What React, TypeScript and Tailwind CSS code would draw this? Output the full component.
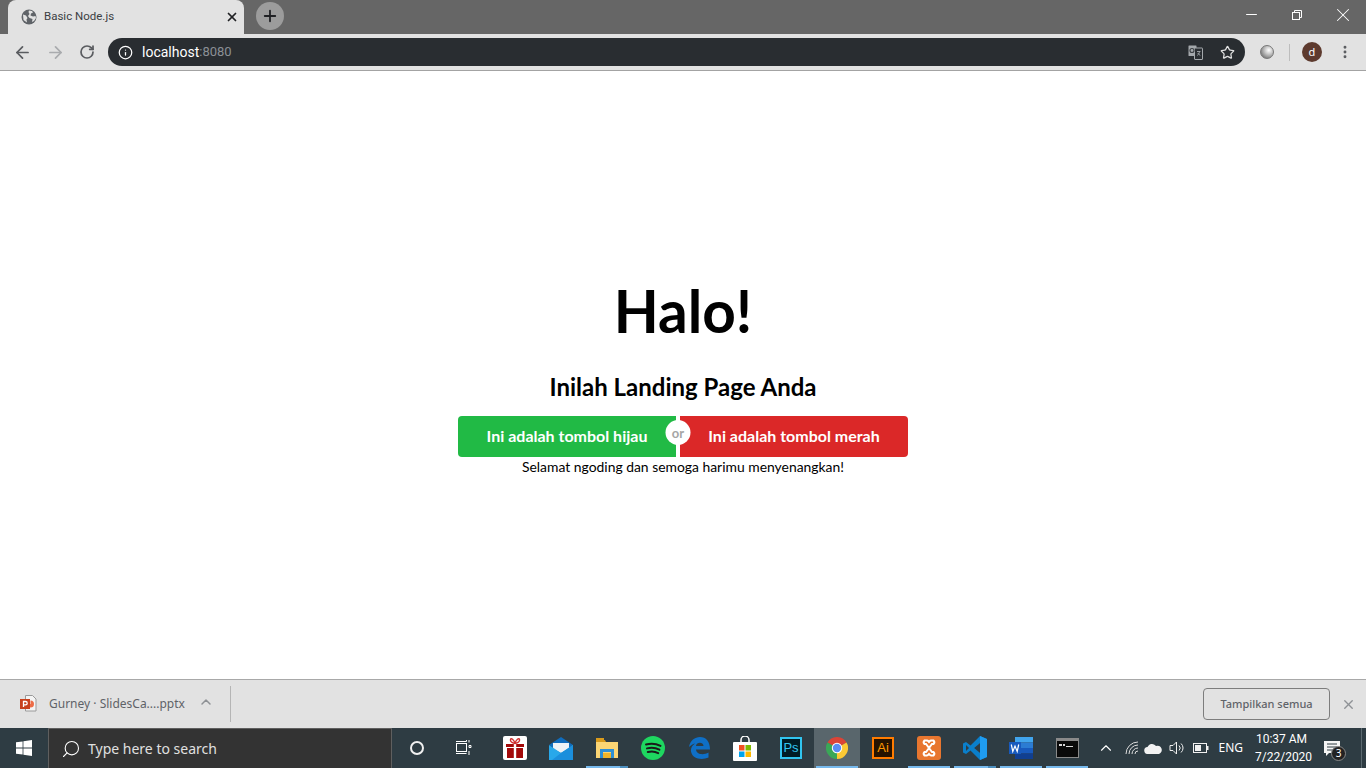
import React from 'react';
import { ArrowLeft, ArrowRight, RotateCw, X, Plus, Info, Star, Search, ChevronUp, Minus, MoreVertical } from 'lucide-react';

const UI_FONT = "font-['Noto_Sans','Open_Sans',sans-serif]";

function Globe() {
  return (
    <svg width="16" height="16" viewBox="0 0 16 16">
      <circle cx="8" cy="8" r="7.5" fill="#5f6368" />
      <path d="M2 5.5l3 1 1.5 2.5-1 1.5.5 3L2.5 11zM8 1.5l3 .5 1 1.5-2 1-.5 2 2.5 1 2.5-.5.5 2-2 3-2 1 .5-3-3-1-1.5-2 1.5-2-1-2z" fill="#e2e2e2" />
    </svg>
  );
}

function RestoreIcon() {
  return (
    <svg width="10" height="10" viewBox="0 0 10 10" fill="none" stroke="#fff" strokeWidth="1">
      <rect x="0.5" y="2.5" width="7" height="7" />
      <path d="M2.5 2.5v-2h7v7h-2" />
    </svg>
  );
}

function TranslateIcon() {
  return (
    <svg width="15" height="15" viewBox="0 0 15 15">
      <rect x="0.5" y="0.5" width="8" height="10.5" rx="0.5" fill="#a4a8ac" />
      <rect x="6.5" y="3" width="8" height="11.5" rx="0.5" fill="#2a2e32" stroke="#a4a8ac" />
      <circle cx="4" cy="5.5" r="2" fill="none" stroke="#3a3e42" strokeWidth="1.1" />
      <path d="M9 6.5h3.5M11.5 6.5c-.3 2-1 3-2.2 4M9.8 8c.5 1 1.3 1.8 2.5 2.4" fill="none" stroke="#a4a8ac" strokeWidth="0.9" />
    </svg>
  );
}

function PptIcon() {
  return (
    <svg width="17" height="18" viewBox="0 0 17 18">
      <path d="M5.5 .5h7l3.5 3.5v12H5.5z" fill="#f4f4f4" stroke="#9a9a9a" />
      <path d="M10.5 5.5a3.5 3.5 0 1 1-3.500 3.500h3.500z" fill="#ed6c47" />
      <rect x="0" y="4" width="10" height="10" fill="#c8401c" />
      <path d="M3.5 12V6.500h2a1.700 1.700 0 0 1 0 3.400h-2" fill="none" stroke="#fff" strokeWidth="1.3" />
    </svg>
  );
}

function WindowsLogo() {
  return (
    <svg width="16" height="16" viewBox="0 0 16 16" fill="#fff">
      <path d="M0 2.3L6.6 1.4V7.6H0zM7.4 1.3L16 0V7.6H7.4zM0 8.4H6.6V14.6L0 13.7zM7.4 8.4H16V16L7.4 14.7z" />
    </svg>
  );
}

function TaskViewIcon() {
  return (
    <svg width="17" height="16" viewBox="0 0 17 16" fill="none" stroke="#fff" strokeWidth="1">
      <rect x="1.5" y="3.5" width="10" height="8" />
      <path d="M1 1.500h10.500M1 13.500h10.500M11.500 1.500v-1.500M14 0v2.500M14 5.500h2v2h-2zM14 11v4" />
    </svg>
  );
}

function GiftIcon() {
  return (
    <svg width="24" height="24" viewBox="0 0 24 24">
      <rect width="24" height="24" rx="2" fill="#fff" />
      <path d="M3 8h18v3H3zM4 12h16v10H4z" fill="#a30a0a" />
      <rect x="10.8" y="8" width="2.4" height="14" fill="#fff" />
      <path d="M12 7.500C9 7 7 5.500 7.500 3.500S11 3.500 12 7.500C13 3.500 16 1.500 16.500 3.500S15 7 12 7.500z" fill="none" stroke="#d03030" strokeWidth="1.4" />
    </svg>
  );
}

function MailIcon() {
  return (
    <svg width="24" height="23" viewBox="0 0 24 23">
      <path d="M12 0L0 8l12 8 12-8z" fill="#0f6cbd" />
      <path d="M4 6h16v6l-8 4-8-4z" fill="#eef2f6" />
      <path d="M0 8l12 8 12-8v15H0z" fill="#28a8ea" />
      <path d="M24 23H3l9-7 12-8z" fill="#1b8fdc" />
    </svg>
  );
}

function FolderIcon() {
  return (
    <svg width="22" height="20" viewBox="0 0 22 20">
      <path d="M0 2h9l1 2H0z" fill="#d99b1c" />
      <path d="M0 0h8v3H0z" fill="#d99b1c" />
      <path d="M0 4h22v16H0z" fill="#fbd574" />
      <path d="M4 11h14v9h-3v-6H7v6H4z" fill="#2d8fd5" />
      <path d="M7 15h8v5H7z" fill="#f0b429" />
    </svg>
  );
}

function SpotifyIcon() {
  return (
    <svg width="24" height="24" viewBox="0 0 24 24" fill="none">
      <circle cx="12" cy="12" r="12" fill="#1ed760" />
      <path d="M5 8.500c5-1.500 10-1 14.500 1.400M6 12.400c4.500-1.200 8.500-.8 12.400 1.300M6.800 16c3.800-1 7.200-.7 10.400 1.100" stroke="#1a1a1a" strokeWidth="2" strokeLinecap="round" />
    </svg>
  );
}

function EdgeIcon() {
  return (
    <svg width="21" height="22" viewBox="0 0 21 22">
      <path d="M0 10C1 3.500 6 0 11 0c6 0 10 4.500 10 12.500H7c.2 5 7.500 6 12.500 3v5c-6 2.800-16 2-17.500-6-.5-3 1-6 4-8-2.500.5-4.500 2-6 3.500zM7 9h7.500c0-4-7-4.500-7.500 0z" fill="#0f6fc6" />
    </svg>
  );
}

function StoreIcon() {
  return (
    <svg width="24" height="25" viewBox="0 0 24 25">
      <path d="M8 7V4a4 4 0 0 1 8 0v3" fill="none" stroke="#fff" strokeWidth="1.5" />
      <rect y="6" width="24" height="19" rx="1" fill="#fff" />
      <rect x="6" y="9" width="5.5" height="5.5" fill="#f25022" />
      <rect x="12.5" y="9" width="5.5" height="5.5" fill="#7fba00" />
      <rect x="6" y="15.5" width="5.5" height="5.5" fill="#00a4ef" />
      <rect x="12.5" y="15.5" width="5.5" height="5.5" fill="#ffb900" />
    </svg>
  );
}

function ChromeIcon() {
  return (
    <svg width="22" height="22" viewBox="0 0 22 22">
      <path d="M11 11L1.470 5.500A11 11 0 0 1 20.530 5.500z" fill="#db4437" />
      <path d="M11 11L20.530 5.500A11 11 0 0 1 11 22z" fill="#fcc934" />
      <path d="M11 11L11 22A11 11 0 0 1 1.470 5.500z" fill="#3aa757" />
      <circle cx="11" cy="11" r="5.2" fill="#fff" />
      <circle cx="11" cy="11" r="4.2" fill="#5a8df3" />
    </svg>
  );
}

function XamppIcon() {
  return (
    <svg width="24" height="24" viewBox="0 0 24 24">
      <rect width="24" height="24" rx="3" fill="#e8762f" />
      <path d="M9 8H7.500a2.500 2.500 0 0 1 0-3.500H10c1 0 1.500 1 2 1.500.5-.5 1-1.500 2-1.500h2.500a2.500 2.500 0 0 1 0 3.500H15L12 12l3 4h1.500a2.500 2.500 0 0 1 0 3.500H14c-1 0-1.500-1-2-1.500-.5.5-1 1.500-2 1.500H7.500a2.500 2.500 0 0 1 0-3.500H9l3-4z" fill="none" stroke="#fff" strokeWidth="2" />
    </svg>
  );
}

function VsCodeIcon() {
  return (
    <svg width="24" height="24" viewBox="0 0 24 24">
      <path d="M17 0l7 3v18l-7 3L7.500 14.500 3 18l-3-1.500v-9L3 6l4.500 3.500z" fill="#0a7fcb" />
      <path d="M17 0l7 3v18l-7 3zM17 7l-6 5 6 5z" fill="#1f9cf0" />
      <path d="M3 9l3 3-3 3z" fill="#2e3c43" />
      <path d="M17 7v10l-6-5z" fill="#2e3c43" />
    </svg>
  );
}

function WordIcon() {
  return (
    <svg width="24" height="22" viewBox="0 0 24 22">
      <rect x="6" y="0" width="18" height="5.5" fill="#41a5ee" />
      <rect x="6" y="5.5" width="18" height="5.5" fill="#2b7cd3" />
      <rect x="6" y="11" width="18" height="5.5" fill="#185abd" />
      <rect x="6" y="16.5" width="18" height="5.5" fill="#103f91" />
      <rect x="0" y="5" width="12" height="12" fill="#185abd" />
      <path d="M2.300 7.500l1.500 7 2.200-5.500 2.200 5.500 1.500-7" fill="none" stroke="#fff" strokeWidth="1.2" />
    </svg>
  );
}

function TerminalIcon() {
  return (
    <svg width="23" height="20" viewBox="0 0 23 20">
      <rect width="23" height="20" fill="#8a8a8a" />
      <rect x="1" y="3" width="21" height="16" fill="#0a0a0a" />
      <path d="M3 6h3v2H3zM7 6h2v2H7zM10 8h7v1h-7z" fill="#d8d8d8" />
    </svg>
  );
}

function LabelTile({ text, border, bg, color }: { text: string; border: string; bg: string; color: string }) {
  return (
    <div className={`w-[22px] h-[22px] flex items-center justify-center border-2 text-[13px] font-['Liberation_Sans',sans-serif] ${border} ${bg} ${color}`}>
      {text}
    </div>
  );
}

function TaskButton({ children, line, active, split }: { children: React.ReactNode; line?: boolean; active?: boolean; split?: boolean }) {
  return (
    <div className={`relative w-[46px] h-full flex items-center justify-center ${active ? 'bg-[#59666c]' : ''}`}>
      {children}
      {line && <div className="absolute bottom-0 left-[2px] right-[2px] h-[2px] bg-[#76b9ed]" />}
      {split && <div className="absolute bottom-0 right-[2px] w-[8px] h-[2px] bg-[#4c8fbf]" />}
    </div>
  );
}

function TabStrip() {
  return (
    <div className="h-[34px] bg-[#666666] flex items-end pl-2 shrink-0">
      <div className="w-[236px] h-[34px] bg-[#e2e2e2] rounded-t-lg flex items-center pl-[13px] pr-[5px]">
        <Globe />
        <span className="ml-[7px] text-[11.5px] text-[#3c4043] flex-1 font-['Roboto',sans-serif]">Basic Node.js</span>
        <X size={14} strokeWidth={3} className="text-[#202124]" />
      </div>
      <div className="ml-3 mb-[3px] w-[28px] h-[28px] rounded-full bg-[#9c9c9c] flex items-center justify-center self-center">
        <Plus size={18} strokeWidth={2.4} className="text-[#202124]" />
      </div>
      <div className="flex-1" />
      <div className="self-start flex items-center h-[29px] text-white">
        <div className="w-[46px] flex justify-center"><Minus size={17} strokeWidth={1.4} /></div>
        <div className="w-[46px] flex justify-center"><RestoreIcon /></div>
        <div className="w-[46px] flex justify-center"><X size={22} strokeWidth={1.1} /></div>
      </div>
    </div>
  );
}

function Toolbar() {
  return (
    <div className="h-[37px] bg-[#e2e2e2] border-b border-[#a3a3a3] flex items-center shrink-0">
      <div className="w-[108px] flex items-center pl-[13px] gap-[14px]">
        <ArrowLeft size={19} strokeWidth={2.2} className="text-[#5a5c60]" />
        <ArrowRight size={19} strokeWidth={2.2} className="text-[#a9abae]" />
        <RotateCw size={16} strokeWidth={2.6} className="text-[#5a5c60]" />
      </div>
      <div className="w-[1137px] h-[28px] bg-[#292d31] rounded-full flex items-center pl-[10px] pr-[10px] text-[14px] font-['Roboto',sans-serif]">
        <Info size={15} strokeWidth={2} className="text-white" />
        <span className="ml-[9px] text-white">localhost</span>
        <span className="text-[#8b9096] text-[13px]">:8080</span>
        <div className="flex-1" />
        <TranslateIcon />
        <Star size={15} strokeWidth={2} className="text-[#e2e2e2] ml-[17px]" />
      </div>
      <div className="flex-1 flex items-center pl-[15px]">
        <div className="w-[14px] h-[14px] rounded-full bg-[radial-gradient(circle_at_65%_35%,#ffffff_0%,#c8c8c8_35%,#555555_100%)] border border-[#777777]" />
        <div className="ml-[15px] w-px h-[17px] bg-[#bdbdbd]" />
        <div className="ml-[12px] w-5 h-5 rounded-full bg-[#5d3a2e] text-white text-[11px] flex items-center justify-center">d</div>
        <MoreVertical size={16} strokeWidth={2.4} className="ml-[15px] text-[#5a5c60]" />
      </div>
    </div>
  );
}

function LandingPage() {
  return (
    <main className="flex-1 bg-white flex flex-col items-center pt-[199px] text-black font-['Lato',sans-serif]">
      <h1 className="text-[58.5px] leading-[80px] font-bold">Halo!</h1>
      <h2 className="mt-[21px] text-[24px] leading-[32px] font-bold">Inilah Landing Page Anda</h2>
      <div className="mt-[13px] flex w-[450px] h-[41px] text-white text-[16px] font-bold">
        <button className="w-[218px] pb-[2px] bg-[#21ba45] rounded-l-[4px]">Ini adalah tombol hijau</button>
        <div className="relative w-[4px] bg-white">
          <span className="absolute left-1/2 top-[4px] -translate-x-1/2 w-[25px] h-[25px] pt-[3px] rounded-full bg-white text-[#a5a5a5] text-[13px] font-bold flex items-center justify-center">or</span>
        </div>
        <button className="w-[228px] pb-[2px] bg-[#db2828] rounded-r-[4px]">Ini adalah tombol merah</button>
      </div>
      <p className="text-[13.9px] leading-[20px]">Selamat ngoding dan semoga harimu menyenangkan!</p>
    </main>
  );
}

function DownloadBar() {
  return (
    <div className={`h-[49px] bg-[#e2e2e2] border-t border-[#a8a8a8] flex items-center shrink-0 ${UI_FONT}`}>
      <div className="ml-[20px]"><PptIcon /></div>
      <span className="ml-[12px] text-[12px] text-[#5f6368]">Gurney · SlidesCa....pptx</span>
      <ChevronUp size={16} strokeWidth={2.2} className="ml-[13px] mb-[4px] text-[#8e9195]" />
      <div className="ml-[16px] w-px h-[36px] bg-[#b5b5b5]" />
      <div className="flex-1" />
      <button className="w-[127px] h-[32px] border border-[#7d7d7d] rounded-[4px] text-[11px] font-medium text-[#5f6368]">Tampilkan semua</button>
      <X size={15} strokeWidth={2.2} className="ml-[11px] mr-[10px] text-[#8e9195]" />
    </div>
  );
}

function Taskbar() {
  return (
    <div className={`h-[40px] bg-[#2e3c43] flex items-center text-white shrink-0 ${UI_FONT}`}>
      <div className="w-[48px] flex justify-center"><WindowsLogo /></div>
      <div className="w-[344px] h-full bg-[#333333] border border-[#5f5f5f] border-b-0 flex items-center pl-[12px] text-[14px] text-[#e0e0e0]">
        <Search size={20} strokeWidth={1.3} className="text-white -scale-x-100" />
        <span className="ml-[7px]">Type here to search</span>
      </div>
      <div className="h-full flex ml-[2px]">
        <TaskButton>
          <div className="w-[14px] h-[14px] rounded-full border-2 border-[#f0f0f0]" />
        </TaskButton>
        <TaskButton><TaskViewIcon /></TaskButton>
        <div className="w-[6px]" />
        <TaskButton><GiftIcon /></TaskButton>
        <TaskButton><MailIcon /></TaskButton>
        <TaskButton line split><FolderIcon /></TaskButton>
        <TaskButton><SpotifyIcon /></TaskButton>
        <TaskButton><EdgeIcon /></TaskButton>
        <TaskButton><StoreIcon /></TaskButton>
        <TaskButton><LabelTile text="Ps" border="border-[#31c5f0]" bg="bg-[#001d26]" color="text-[#31c5f0]" /></TaskButton>
        <TaskButton active line><ChromeIcon /></TaskButton>
        <TaskButton><LabelTile text="Ai" border="border-[#ff7c00]" bg="bg-[#261300]" color="text-[#ff9a00]" /></TaskButton>
        <TaskButton line><XamppIcon /></TaskButton>
        <TaskButton line split><VsCodeIcon /></TaskButton>
        <TaskButton line><WordIcon /></TaskButton>
        <TaskButton line><TerminalIcon /></TaskButton>
      </div>
      <div className="flex-1" />
      <div className="flex items-center h-full text-[12px]">
        <ChevronUp size={18} strokeWidth={1.5} />
        <svg className="ml-[10px]" width="16" height="14" viewBox="0 0 16 14" fill="none" stroke="#ddd" strokeWidth="1">
          <path d="M1 13A12 12 0 0 1 13 1M4 13a9 9 0 0 1 9-9M7 13a6 6 0 0 1 6-6M10 13a3 3 0 0 1 3-3" />
        </svg>
        <svg className="ml-[3px]" width="18" height="11" viewBox="0 0 18 11" fill="#f2f2f2">
          <path d="M4 11a3.500 3.500 0 0 1-.5-7A5 5 0 0 1 12 3a3.800 3.800 0 0 1 3 8z" />
        </svg>
        <svg className="ml-[7px]" width="16" height="14" viewBox="0 0 16 14" fill="none" stroke="#f0f0f0" strokeWidth="1">
          <path d="M1 4.500h3L7.500 1v12L4 9.500H1zM10 4.500a3.500 3.500 0 0 1 0 5M12 2.500a6 6 0 0 1 0 9" />
        </svg>
        <svg className="ml-[8px]" width="16" height="10" viewBox="0 0 16 10" fill="none">
          <rect x="0.5" y="0.5" width="13" height="9" stroke="#f0f0f0" />
          <rect x="2" y="2" width="6" height="6" fill="#f0f0f0" />
          <rect x="14" y="3" width="1.5" height="4" fill="#f0f0f0" />
        </svg>
        <span className="ml-[9px]">ENG</span>
        <div className="ml-[12px] w-[53px] text-center leading-[18px] whitespace-nowrap font-['Roboto',sans-serif]">
          <div>10:37 AM</div>
          <div>7/22/2020</div>
        </div>
        <div className="relative ml-[16px] mr-[21px] w-[16px] h-[14px]">
          <svg width="16" height="15" viewBox="0 0 16 15" fill="#f5f5f5">
            <path d="M0 0h16v12H5l-3 3v-3H0z" />
            <path d="M3 3h10M3 6h10M3 9h7" stroke="#2e3c43" strokeWidth="1" />
          </svg>
          <span className="absolute left-[7px] top-[5px] w-[15px] h-[15px] rounded-full bg-[#222] border border-[#888] text-[10px] flex items-center justify-center">3</span>
        </div>
        <div className="w-px h-full bg-[#5c6a70] mr-[4px]" />
      </div>
    </div>
  );
}

export default function App() {
  return (
    <div className="h-screen w-full overflow-hidden flex flex-col font-['Noto_Sans','Open_Sans',sans-serif]">
      <TabStrip />
      <Toolbar />
      <LandingPage />
      <DownloadBar />
      <Taskbar />
    </div>
  );
}
